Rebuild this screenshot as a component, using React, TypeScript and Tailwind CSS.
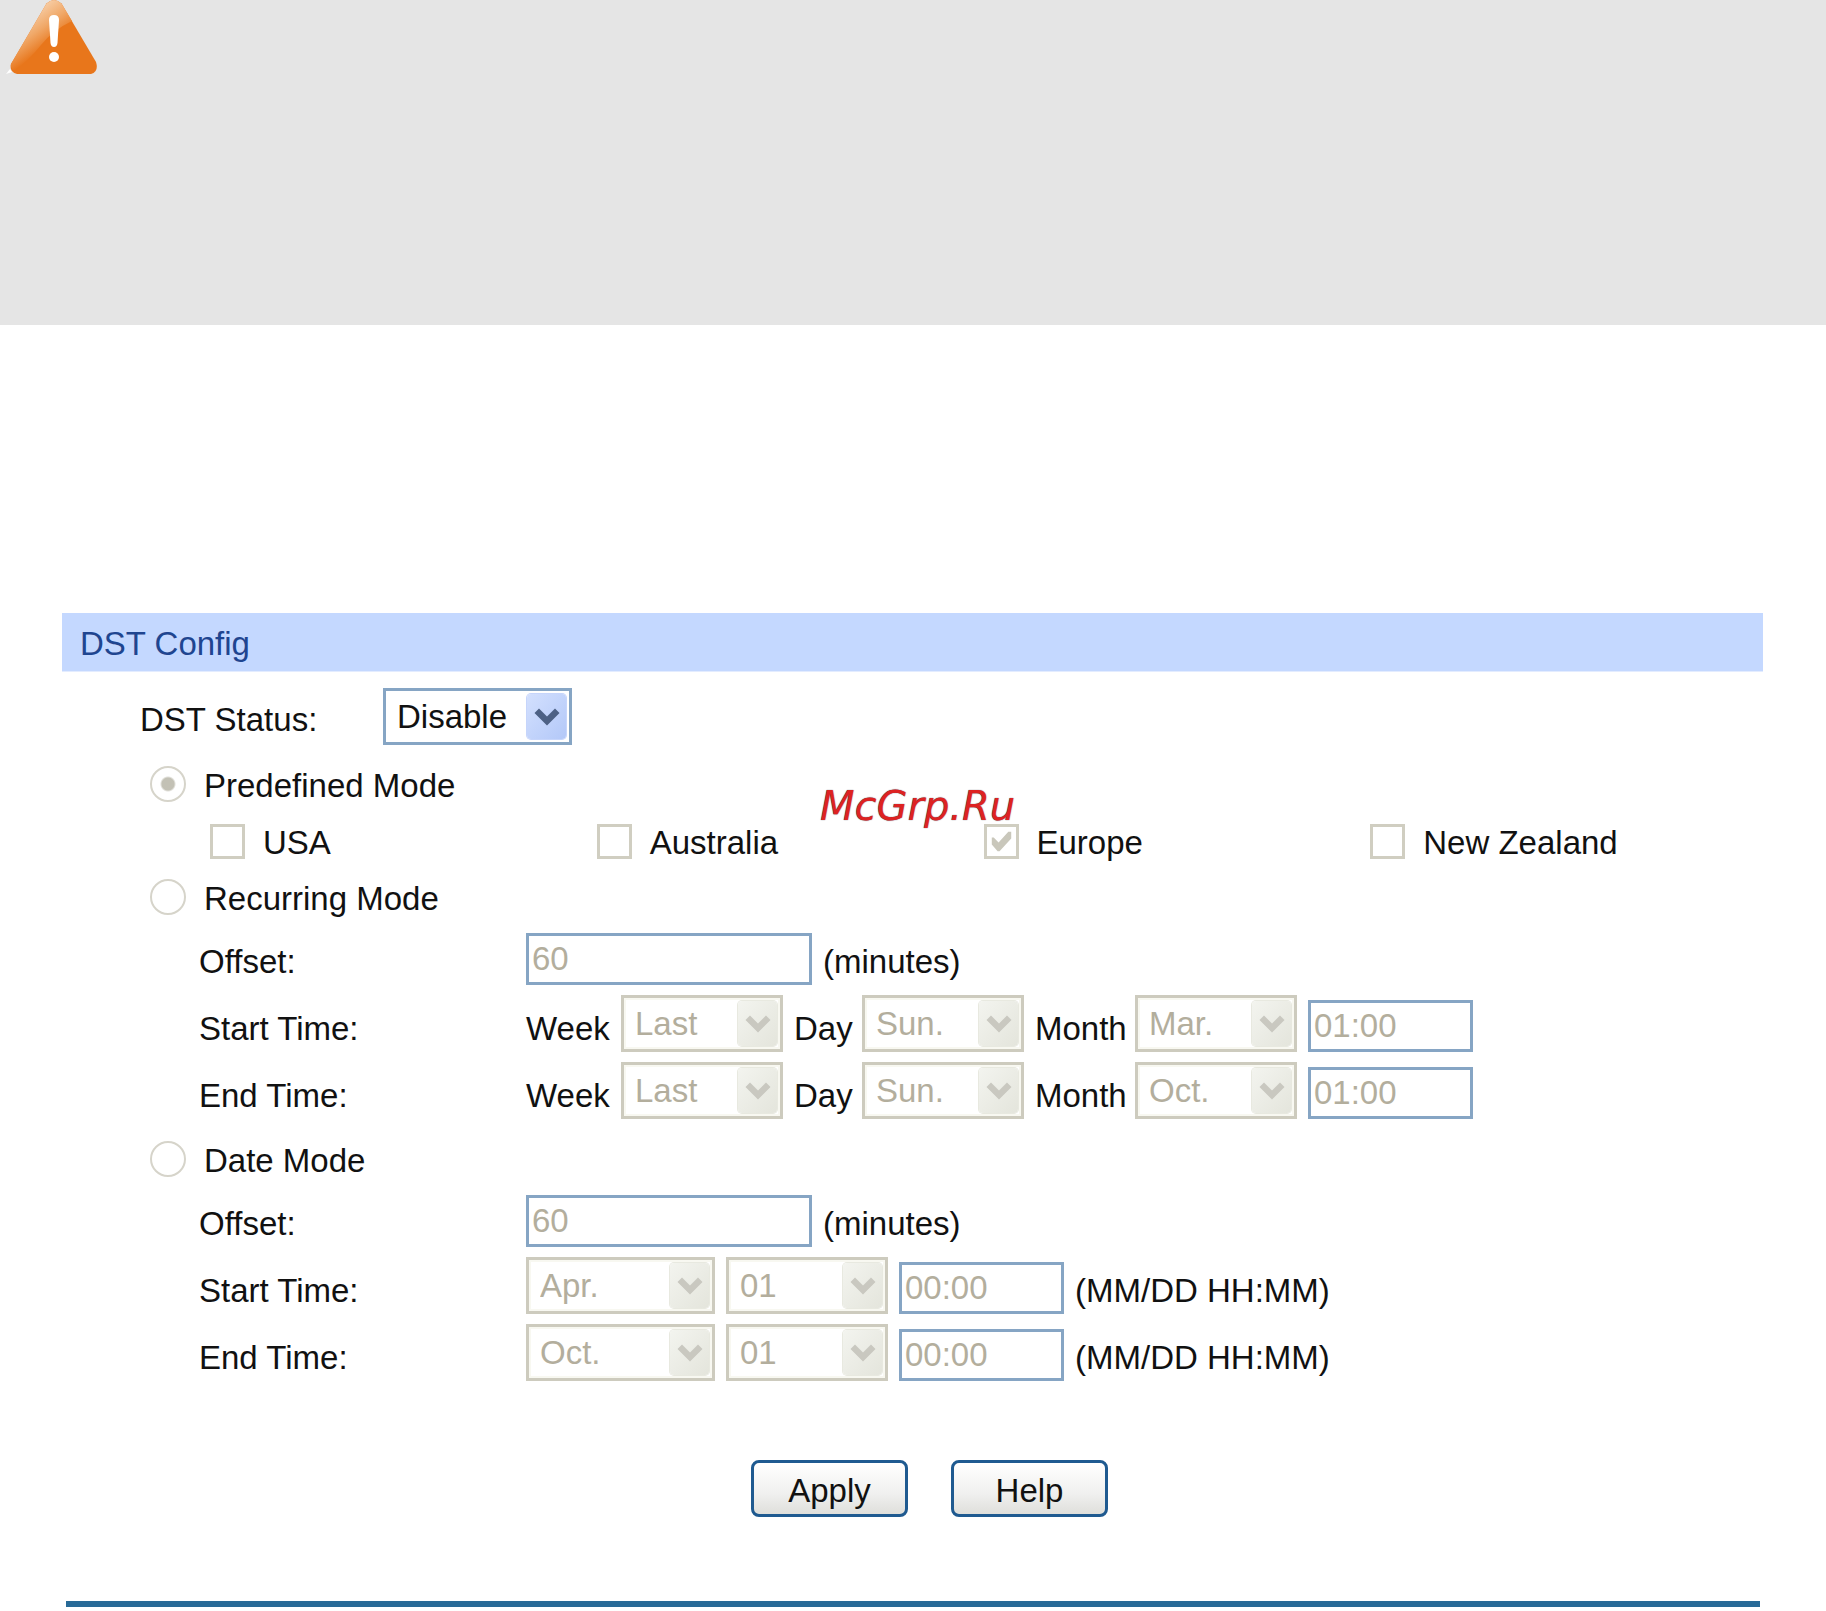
import { useId, type ReactNode } from "react";

const labelText = "text-[33px] leading-10 whitespace-nowrap";

function Chevron({ disabled }: { disabled: boolean }) {
  return (
    <span
      className={
        "pointer-events-none absolute top-[6px] right-[6px] bottom-[6px] flex w-[39px] items-center justify-center rounded-[4px] " +
        (disabled
          ? "bg-linear-to-br from-[#f3f4ef] to-[#e4e5dc] shadow-[0_0_0_1px_#e8e9e0]"
          : "bg-linear-to-br from-[#d3e0fe] to-[#b3c8f8] shadow-[0_0_0_1px_#c6d5fb]")
      }
    >
      <svg viewBox="0 0 26 18" className="h-[18px] w-[26px]" aria-hidden="true">
        <path
          d="M0.5 5 L5 0.500 L13 8.500 L21 0.500 L25.500 5 L13 17.500 Z"
          fill={disabled ? "#c9c8c0" : "#4d6185"}
        />
      </svg>
    </span>
  );
}

function Dropdown({
  id,
  label,
  value,
  disabled = false,
  wide = false,
}: {
  id?: string;
  label?: string;
  value: string;
  disabled?: boolean;
  wide?: boolean;
}) {
  return (
    <span className={"relative flex h-[57px] shrink-0 " + (wide ? "w-[189px]" : "w-[162px]")}>
      <select
        id={id}
        aria-label={label}
        disabled={disabled}
        defaultValue={value}
        className={
          "h-full w-full appearance-none border-[3px] bg-white pl-[11px] text-[33px] leading-10 opacity-100 " +
          (disabled
            ? "border-[#cdcbbe] text-[#b3ae9d] shadow-[inset_0_0_0_2px_#f8f8f1]"
            : "border-[#86a5c4] text-[#111111]")
        }
      >
        <option>{value}</option>
      </select>
      <Chevron disabled={disabled} />
    </span>
  );
}

function TextBox({ id, label, value, wide = false }: { id?: string; label?: string; value: string; wide?: boolean }) {
  return (
    <input
      id={id}
      type="text"
      aria-label={label}
      disabled
      defaultValue={value}
      className={
        "h-[52px] shrink-0 border-[3px] border-[#86a5c4] bg-white pl-[3px] text-[33px] leading-10 text-[#b3ae9d] opacity-100 " +
        (wide ? "w-[286px]" : "w-[165px]")
      }
    />
  );
}

function ModeRow({ label, checked = false }: { label: string; checked?: boolean }) {
  return (
    <label className="flex h-9 items-center gap-[18px] pl-[88px]">
      <input
        type="radio"
        name="dst-mode"
        disabled
        defaultChecked={checked}
        className="size-9 shrink-0 appearance-none rounded-full border-2 border-[#d6d4ca] bg-white checked:bg-[radial-gradient(circle,#c3c1b5_6px,#ffffff_8px)]"
      />
      <span className={labelText + " pt-1"}>{label}</span>
    </label>
  );
}

function Region({ label, checked = false }: { label: string; checked?: boolean }) {
  return (
    <label className="flex h-9 items-center gap-[18px]">
      <span className="relative flex size-[35px] shrink-0">
        <input
          type="checkbox"
          disabled
          defaultChecked={checked}
          className="size-full appearance-none border-[3px] border-[#d0cec1] bg-white"
        />
        {checked && (
          <svg viewBox="0 0 36 36" className="pointer-events-none absolute inset-0 size-full" aria-hidden="true">
            <path d="M8 14 L10 14 L15 19 L25 8 L28 8 L28 15 L16 28 L14 28 L8 21 Z" fill="#c9c7bb" />
          </svg>
        )}
      </span>
      <span className={labelText + " pt-1"}>{label}</span>
    </label>
  );
}

function Field({ label, htmlFor, children }: { label: string; htmlFor?: string; children: ReactNode }) {
  return (
    <div className="flex items-end gap-[11px] pl-[137px]">
      <label htmlFor={htmlFor} className={labelText + " w-[316px] shrink-0 pb-[3px]"}>
        {label}
      </label>
      {children}
    </div>
  );
}

function OffsetField() {
  const id = useId();
  return (
    <Field label="Offset:" htmlFor={id}>
      <TextBox id={id} value="60" wide />
      <span className={labelText + " pb-[3px]"}>(minutes)</span>
    </Field>
  );
}

function RecurringTime({ label, month }: { label: string; month: string }) {
  const id = useId();
  return (
    <Field label={label} htmlFor={id + "week"}>
      <label htmlFor={id + "week"} className={labelText + " w-[84px] pb-[3px]"}>
        Week
      </label>
      <Dropdown id={id + "week"} value="Last" disabled />
      <label htmlFor={id + "day"} className={labelText + " w-[57px] pb-[3px]"}>
        Day
      </label>
      <Dropdown id={id + "day"} value="Sun." disabled />
      <label htmlFor={id + "month"} className={labelText + " w-[89px] pb-[3px]"}>
        Month
      </label>
      <Dropdown id={id + "month"} value={month} disabled />
      <TextBox label={label + " hour"} value="01:00" />
    </Field>
  );
}

function DateTime({ label, month }: { label: string; month: string }) {
  const id = useId();
  return (
    <Field label={label} htmlFor={id}>
      <Dropdown id={id} value={month} disabled wide />
      <Dropdown label={label + " day"} value="01" disabled />
      <TextBox label={label + " hour"} value="00:00" />
      <span className={labelText + " pb-[3px]"}>(MM/DD HH:MM)</span>
    </Field>
  );
}

function PushButton({ children }: { children: ReactNode }) {
  return (
    <button
      type="button"
      className="h-[57px] w-[157px] rounded-[8px] border-[3px] border-[#1f5a90] bg-linear-to-b from-white via-[#f0f0ef] via-60% to-[#dfdfdb] pt-1 text-[33px] leading-10"
    >
      {children}
    </button>
  );
}

function WarningIcon() {
  return (
    <svg viewBox="0 0 100 76" className="ml-[3px] h-[76px] w-[100px]" role="img" aria-label="Warning">
      <defs>
        <linearGradient id="shine" gradientUnits="userSpaceOnUse" x1="26" y1="18" x2="46" y2="46">
          <stop offset="0" stopColor="#f6c79b" />
          <stop offset="0.45" stopColor="#f0a868" />
          <stop offset="1" stopColor="#e8761b" />
        </linearGradient>
      </defs>
      <path d="M3 74 L7 69 L9 72 Z" fill="#ffffff" />
      <path
        d="M43.500 3.500 Q51 -3.500 58.500 3.500 L93 62 Q96 72 88 74 L14 74 Q6 72 8 64 Z"
        fill="#e8761b"
      />
      <path d="M43.500 3.500 Q51 -3.500 58.500 3.500 L69 21 Q50 30 38 45 Q26 60 11 71 Q7 68 8 64 Z" fill="url(#shine)" />
      <path d="M46 20 Q46 15 51 15 Q56 15 56 20 L54.500 43 Q54 47 51 47 Q48 47 47.500 43 Z" fill="#ffffff" />
      <circle cx="51" cy="57" r="5" fill="#ffffff" />
    </svg>
  );
}

export default function App() {
  return (
    <main className="relative overflow-hidden bg-white pb-1 font-['Liberation_Sans',Arial,sans-serif] text-[#111111]">
      <div className="h-[325px] bg-[#e5e5e5]">
        <WarningIcon />
      </div>

      <form className="mr-[63px] ml-[62px] mt-72">
        <h2 className="h-[59px] border-b border-[#e3ecff] bg-[#c4d8ff] pt-[11px] pl-[18px] text-[33px] leading-10 text-[#1f4590]">
          DST Config
        </h2>

        <div className="mt-[16px] flex items-end pl-[78px]">
          <label htmlFor="dst-status" className={labelText + " w-[243px] pb-[5px]"}>
            DST Status:
          </label>
          <Dropdown id="dst-status" value="Disable" wide />
        </div>

        <div className="mt-[21px]">
          <ModeRow label="Predefined Mode" checked />
        </div>
        <div className="mt-[21px] grid grid-cols-4 pr-[6px] pl-[148px]">
          <Region label="USA" />
          <Region label="Australia" />
          <Region label="Europe" checked />
          <Region label="New Zealand" />
        </div>

        <div className="mt-[20px]">
          <ModeRow label="Recurring Mode" />
        </div>
        <div className="mt-[18px] flex flex-col gap-[10px]">
          <OffsetField />
          <RecurringTime label="Start Time:" month="Mar." />
          <RecurringTime label="End Time:" month="Oct." />
        </div>

        <div className="mt-[22px]">
          <ModeRow label="Date Mode" />
        </div>
        <div className="mt-[18px] flex flex-col gap-[10px]">
          <OffsetField />
          <DateTime label="Start Time:" month="Apr." />
          <DateTime label="End Time:" month="Oct." />
        </div>

        <div className="mt-[79px] flex justify-center gap-[43px] pl-[34px]">
          <PushButton>Apply</PushButton>
          <PushButton>Help</PushButton>
        </div>
      </form>

      <hr className="mx-[66px] mt-[84px] h-[6px] border-0 bg-[#286a97]" />

      <div className="pointer-events-none absolute top-[782px] left-[820px] font-['DejaVu_Sans',Verdana,sans-serif] text-[40px] leading-[48px] text-[#dd2222] italic [text-shadow:0_0_1px_#333344]">
        McGrp.Ru
      </div>
    </main>
  );
}
